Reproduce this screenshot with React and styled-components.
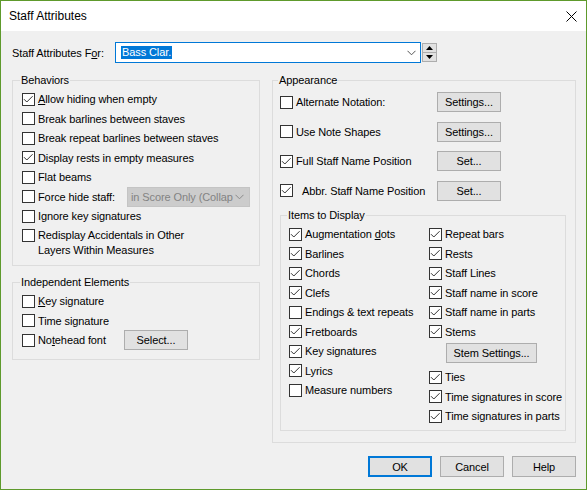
import React from "react";
import styled, { createGlobalStyle } from "styled-components";

const FONT = `"Liberation Sans", Arial, sans-serif`;

const Global = createGlobalStyle`
  html, body { margin: 0; padding: 0; background: #ffffff; }
  body { font-family: ${FONT}; font-size: 11px; letter-spacing: -0.1px; color: #000; }
  * { box-sizing: border-box; }
  u { text-underline-offset: 1px; }
`;

const Window = styled.div`
  width: 587px;
  height: 490px;
  border: 1px solid #5e9a2c;
  background: #f0f0f0;
  display: flex;
  flex-direction: column;
`;

const TitleBar = styled.div`
  height: 30px;
  flex: none;
  background: #ffffff;
  display: flex;
  align-items: center;
  justify-content: space-between;
  padding: 0 9px 0 8px;
  font-size: 12px;
  letter-spacing: 0;
`;

const CloseIcon = styled.svg`
  display: block;
  width: 11px;
  height: 11px;
`;

const Body = styled.div`
  flex: 1;
  padding: 11px 10px 0 11px;
  display: flex;
  flex-direction: column;
`;

const TopRow = styled.div`
  height: 21px;
  display: flex;
  align-items: center;
`;

const FieldLabel = styled.div`
  width: 103px;
  white-space: nowrap;
`;

const Combo = styled.div`
  width: 306px;
  height: 21px;
  border: 1px solid #0078d7;
  background: #ffffff;
  display: flex;
  align-items: center;
  justify-content: space-between;
  padding: 0 4px 0 5px;
`;

const Selection = styled.span`
  background: #0078d7;
  color: #ffffff;
  line-height: 13px;
  padding: 0 1px;
`;

const Spin = styled.div`
  width: 15px;
  height: 19px;
  margin-left: 1px;
  display: flex;
  flex-direction: column;
`;

const SpinHalf = styled.div`
  flex: 1;
  background: #e1e1e1;
  border: 1px solid #adadad;
  border-top-width: ${(p) => (p.$down ? 0 : 1)}px;
  display: flex;
  align-items: center;
  justify-content: center;
`;

const Columns = styled.div`
  display: flex;
  align-items: flex-start;
  gap: 12px;
  margin-top: 17px;
`;

const Column = styled.div`
  width: ${(p) => p.$w}px;
  display: flex;
  flex-direction: column;
`;

const GroupBox = styled.div`
  border: 1px solid #dcdcdc;
  margin: ${(p) => p.$mt || 0}px ${(p) => p.$mr || 0}px 0 ${(p) => p.$ml || 0}px;
  padding: 0 ${(p) => p.$pr || 0}px ${(p) => p.$pb || 0}px ${(p) => p.$pl || 0}px;
`;

const GroupTitle = styled.div`
  width: fit-content;
  height: 15px;
  line-height: 15px;
  margin: -8px 0 0 ${(p) => p.$ml}px;
  padding: 0 1px;
  background: #f0f0f0;
  white-space: nowrap;
`;

const List = styled.div`
  display: flex;
  flex-direction: column;
  padding-top: ${(p) => p.$pt || 0}px;
  gap: ${(p) => p.$gap || 0}px;
`;

const Row = styled.div`
  height: ${(p) => p.$h || 19.5}px;
  display: flex;
  align-items: center;
  white-space: nowrap;
`;

const MultiRow = styled.div`
  display: flex;
  align-items: flex-start;
  padding-top: 2px;
  line-height: 15px;
`;

const Box = styled.span`
  flex: none;
  width: 13px;
  height: 13px;
  border: 1px solid #333333;
  background: #ffffff;
  margin-right: 3px;
  margin-top: ${(p) => p.$mt || 0}px;
  display: inline-flex;
  align-items: center;
  justify-content: center;
`;

const RowText = styled.span`
  display: inline-block;
  width: ${(p) => (p.$w ? `${p.$w}px` : "auto")};
  padding-left: ${(p) => p.$indent || 0}px;
  flex: none;
`;

const PushButton = styled.div`
  flex: none;
  width: ${(p) => p.$w || 64}px;
  height: ${(p) => p.$h || 20}px;
  margin: ${(p) => p.$mt || 0}px 0 ${(p) => p.$mb || 0}px ${(p) => p.$ml || 0}px;
  background: #e1e1e1;
  border: ${(p) => (p.$default ? "2px solid #0078d7" : "1px solid #adadad")};
  display: flex;
  align-items: center;
  justify-content: center;
  white-space: nowrap;
`;

const DisabledSelect = styled.div`
  flex: none;
  width: 123px;
  height: 20px;
  margin-left: auto;
  margin-right: 9px;
  background: #cccccc;
  border: 1px solid #c4c4c4;
  color: #838383;
  display: flex;
  align-items: center;
  justify-content: space-between;
  padding: 0 5px 0 3px;
`;

const ItemsGrid = styled.div`
  display: flex;
  padding-top: 1.25px;
`;

const ItemsCol = styled.div`
  width: ${(p) => (p.$w ? `${p.$w}px` : "auto")};
  display: flex;
  flex-direction: column;
`;

const ButtonBar = styled.div`
  display: flex;
  justify-content: flex-end;
  gap: 8px;
  margin-top: 13px;
`;

const Check = ({ checked, mt }) => (
  <Box $mt={mt}>
    {checked && (
      <svg width="11" height="11" viewBox="0 0 11 11">
        <path d="M1 5.2 L3.8 8 L9.6 2.2" fill="none" stroke="#333" strokeWidth="1" />
      </svg>
    )}
  </Box>
);

const Chevron = ({ color = "#555" }) => (
  <svg width="9" height="6" viewBox="0 0 9 6">
    <path d="M0.5 0.8 L4.5 4.8 L8.5 0.8" fill="none" stroke={color} strokeWidth="1" />
  </svg>
);

const CheckItem = ({ checked, children, h }) => (
  <Row $h={h}>
    <Check checked={checked} />
    <RowText>{children}</RowText>
  </Row>
);

const itemsLeft = [
  [true, <>Augmentation <u>d</u>ots</>],
  [true, "Barlines"],
  [true, "Chords"],
  [true, "Clefs"],
  [false, "Endings & text repeats"],
  [true, "Fretboards"],
  [true, "Key signatures"],
  [true, "Lyrics"],
  [false, "Measure numbers"],
];

const itemsRightTop = [
  [true, "Repeat bars"],
  [true, "Rests"],
  [true, "Staff Lines"],
  [true, "Staff name in score"],
  [true, "Staff name in parts"],
  [true, "Stems"],
];

const itemsRightBottom = [
  [true, "Ties"],
  [true, "Time signatures in score"],
  [true, "Time signatures in parts"],
];

const appearance = [
  [false, "Alternate Notation:", "Settings...", 0],
  [false, "Use Note Shapes", "Settings...", 0],
  [true, "Full Staff Name Position", "Set...", 0],
  [true, "Abbr. Staff Name Position", "Set...", 6],
];

export default function App() {
  return (
    <>
      <Global />
      <Window>
        <TitleBar>
          <span>Staff Attributes</span>
          <CloseIcon viewBox="0 0 11 11">
            <path d="M0.5 0.5 L10.5 10.5 M10.5 0.5 L0.5 10.5" stroke="#000" strokeWidth="1" />
          </CloseIcon>
        </TitleBar>
        <Body>
          <TopRow>
            <FieldLabel>
              Staff Attributes F<u>o</u>r:
            </FieldLabel>
            <Combo>
              <Selection>Bass Clar.</Selection>
              <Chevron />
            </Combo>
            <Spin>
              <SpinHalf>
                <svg width="7" height="4" viewBox="0 0 7 4">
                  <path d="M0 4 L3.5 0 L7 4 Z" fill="#000" />
                </svg>
              </SpinHalf>
              <SpinHalf $down>
                <svg width="7" height="4" viewBox="0 0 7 4">
                  <path d="M0 0 L3.5 4 L7 0 Z" fill="#000" />
                </svg>
              </SpinHalf>
            </Spin>
          </TopRow>

          <Columns>
            <Column $w={248}>
              <GroupBox $pl={9} $pb={7}>
                <GroupTitle $ml={-2}>Behaviors</GroupTitle>
                <List $pt={1.5}>
                  <CheckItem checked>
                    <u>A</u>llow hiding when empty
                  </CheckItem>
                  <CheckItem>Break barlines between staves</CheckItem>
                  <CheckItem>Break repeat barlines between staves</CheckItem>
                  <CheckItem checked>Display rests in empty measures</CheckItem>
                  <CheckItem>Flat beams</CheckItem>
                  <Row>
                    <Check />
                    <RowText>Force hide staff:</RowText>
                    <DisabledSelect>
                      <span>in Score Only (Collap</span>
                      <Chevron color="#8a8a8a" />
                    </DisabledSelect>
                  </Row>
                  <CheckItem>Ignore key signatures</CheckItem>
                  <MultiRow>
                    <Check mt={1} />
                    <RowText>
                      Redisplay Accidentals in Other
                      <br />
                      Layers Within Measures
                    </RowText>
                  </MultiRow>
                </List>
              </GroupBox>

              <GroupBox $mt={16} $pl={9} $pb={9}>
                <GroupTitle $ml={-2}>Independent Elements</GroupTitle>
                <List $pt={1.5}>
                  <CheckItem>
                    <u>K</u>ey signature
                  </CheckItem>
                  <CheckItem>Time signature</CheckItem>
                  <Row>
                    <Check />
                    <RowText $w={86}>
                      No<u>t</u>ehead font
                    </RowText>
                    <PushButton>Select...</PushButton>
                  </Row>
                </List>
              </GroupBox>
            </Column>

            <Column $w={304}>
              <GroupBox $pl={7} $pb={11}>
                <GroupTitle $ml={-2}>Appearance</GroupTitle>
                <List $pt={4} $gap={9.5}>
                  {appearance.map(([c, label, btn, indent]) => (
                    <Row key={label} $h={20}>
                      <Check checked={c} />
                      <RowText $w={141} $indent={indent}>
                        {label}
                      </RowText>
                      <PushButton>{btn}</PushButton>
                    </Row>
                  ))}
                </List>

                <GroupBox $mt={14.5} $mr={9} $pl={8} $pb={4.25}>
                  <GroupTitle $ml={-2}>Items to Display</GroupTitle>
                  <ItemsGrid>
                    <ItemsCol $w={140}>
                      {itemsLeft.map(([c, t], i) => (
                        <CheckItem key={i} checked={c}>
                          {t}
                        </CheckItem>
                      ))}
                    </ItemsCol>
                    <ItemsCol>
                      {itemsRightTop.map(([c, t]) => (
                        <CheckItem key={t} checked={c}>
                          {t}
                        </CheckItem>
                      ))}
                      <PushButton $w={91} $ml={17} $mt={1.75} $mb={4.25}>
                        Stem Settings...
                      </PushButton>
                      {itemsRightBottom.map(([c, t]) => (
                        <CheckItem key={t} checked={c}>
                          {t}
                        </CheckItem>
                      ))}
                    </ItemsCol>
                  </ItemsGrid>
                </GroupBox>
              </GroupBox>
            </Column>
          </Columns>

          <ButtonBar>
            <PushButton $default $h={21}>OK</PushButton>
            <PushButton $h={21}>Cancel</PushButton>
            <PushButton $h={21}>Help</PushButton>
          </ButtonBar>
        </Body>
      </Window>
    </>
  );
}
